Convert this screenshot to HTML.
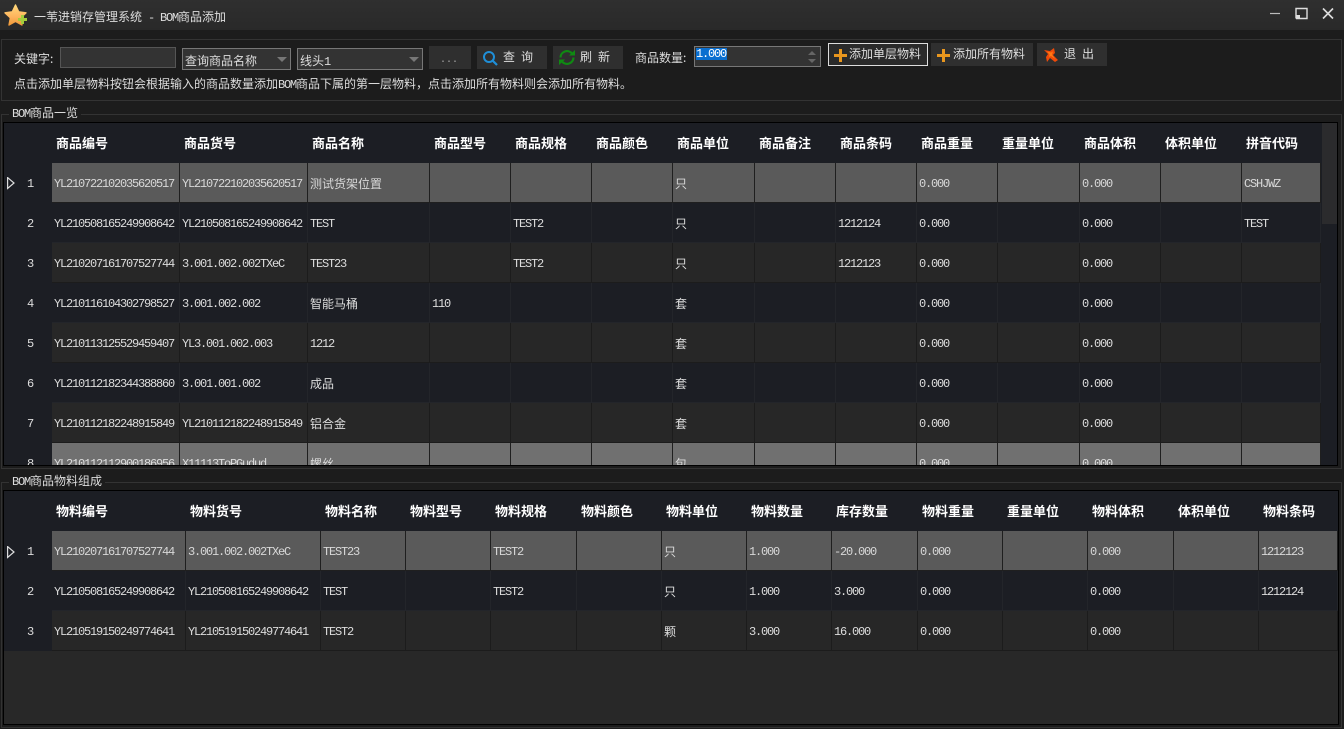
<!DOCTYPE html>
<html lang="zh">
<head>
<meta charset="utf-8">
<title>一苇进销存管理系统 - BOM商品添加</title>
<style>
*{box-sizing:border-box}
html,body{margin:0;padding:0;width:1344px;height:729px;overflow:hidden;background:#1c1c1c}
body{position:relative;color:#ddd;font:12px/14px "Liberation Mono","WenQuanYi Zen Hei","Noto Sans CJK SC",sans-serif}
.a{position:absolute}
.t{position:absolute;white-space:nowrap;font-family:"WenQuanYi Zen Hei","Noto Sans CJK SC",sans-serif;font-size:12px;line-height:14px;color:#ddd}
.l{font-family:"Liberation Mono",monospace;font-size:12px;letter-spacing:-1.2px}
.btn{position:absolute;background:#2f2f2f;color:#ddd}
.box{position:absolute;background:#333;border:1px solid #777}
.grid{position:absolute;background:#282828;border:1px solid #000;overflow:hidden}
table{position:absolute;left:0;top:0;border-collapse:separate;border-spacing:0;table-layout:fixed;background:#1c1e24}
td,th{padding:2px 0 0 2px;height:40px;white-space:nowrap;overflow:hidden;text-align:left;font-weight:normal;border-right:1px solid #23252a;border-bottom:1px solid #23252a;font-family:"Liberation Mono",monospace;font-size:12px;letter-spacing:-1.2px;color:#ddd;vertical-align:middle}
th{padding:0 0 1px 4px;font-family:"WenQuanYi Zen Hei","Noto Sans CJK SC",sans-serif;font-weight:bold;font-size:13px;letter-spacing:0;color:#fff;border:0;height:40px}
td.n,th.n{padding:1px 0 0 23px;text-align:left;border:0;background:#1c1e24;color:#ddd;font-size:12px}
td.c{font-family:"WenQuanYi Zen Hei","Noto Sans CJK SC",sans-serif;font-size:12px;letter-spacing:0}
tr.s td{background:#5a5a5a;border-color:#1f1f1f;color:#d8d8d8}
tr.g td{background:#272727;border-color:#1c1c1c}
tr.h td{background:#707070;border-color:#1f1f1f;color:#ddd}
tr td.n{background:#1c1e24!important;border:0;color:#ddd}
</style>
</head>
<body>
<!-- title bar -->
<div class="a" style="left:0;top:0;width:1344px;height:30px;background:linear-gradient(#2f2f2f,#292929)"></div>
<svg class="a" style="left:3px;top:2px" width="26" height="26" viewBox="0 0 26 26">
<defs><linearGradient id="st" x1="0" y1="0" x2="0" y2="1"><stop offset="0" stop-color="#ffd87a"/><stop offset=".6" stop-color="#fdb35c"/><stop offset="1" stop-color="#f09a3a"/></linearGradient></defs>
<path d="M12.5 3l3.2 6.8 7.3 1-5.4 5 1.4 7.2-6.5-3.6-6.5 3.6 1.4-7.2-5.4-5 7.300-1z" fill="url(#st)" stroke="url(#st)" stroke-width="1.4" stroke-linejoin="round"/>
<path d="M18 13h3v3h3v3h-3v3h-3v-3h-3v-3h3z" fill="#a4cc3c"/>
</svg>
<div class="t" style="left:34px;top:10px">一苇进销存管理系统<span class="l"> - BOM</span>商品添加</div>
<svg class="a" style="left:1265px;top:5px" width="75" height="20" viewBox="0 0 75 20" fill="none" stroke="#ddd">
<path d="M5 8.5h10" stroke-width="1.2" stroke="#bbb"/>
<path d="M31 13.5V3.5h11v10H31" stroke-width="1.4"/><rect x="31" y="10" width="4" height="4" fill="#ddd" stroke="none"/>
<path d="M58 3.500l10 10M68 3.500l-10 10" stroke-width="1.6"/>
</svg>
<!-- toolbar group -->
<div class="a" style="left:1px;top:39px;width:1341px;height:62px;border:1px solid #333"></div>
<div class="t" style="left:14px;top:52px">关键字:</div>
<div class="box" style="left:60px;top:47px;width:116px;height:21px;border-color:#555"></div>
<div class="box" style="left:182px;top:48px;width:109px;height:22px"></div>
<div class="t" style="left:185px;top:54px">查询商品名称</div>
<svg class="a" style="left:276px;top:56px" width="12" height="8"><path d="M1 1h10L6 6z" fill="#777"/></svg>
<div class="box" style="left:297px;top:48px;width:126px;height:22px"></div>
<div class="t" style="left:300px;top:54px">线头<span class="l">1</span></div>
<svg class="a" style="left:408px;top:56px" width="12" height="8"><path d="M1 1h10L6 6z" fill="#777"/></svg>
<div class="btn" style="left:429px;top:46px;width:42px;height:23px"></div>
<div class="t l" style="left:440px;top:54px;color:#aaa;font-size:10px;letter-spacing:0">...</div>
<div class="btn" style="left:477px;top:46px;width:70px;height:23px"></div>
<svg class="a" style="left:482px;top:50px" width="16" height="17" fill="none"><circle cx="7" cy="7" r="5" stroke="#1f8fd8" stroke-width="2"/><path d="M10.500 10.500l4.500 4.500" stroke="#1f8fd8" stroke-width="2.200"/></svg>
<div class="t" style="left:503px;top:50px;letter-spacing:6px">查询</div>
<div class="btn" style="left:553px;top:46px;width:70px;height:23px"></div>
<svg class="a" style="left:558px;top:49px" width="18" height="17" fill="none" stroke="#0f8a12" stroke-width="2.200"><path d="M2.500 8.500A6.500 6.500 0 0 1 14 4.500"/><path d="M15.500 8.500A6.500 6.500 0 0 1 4 12.500"/><path d="M11 6.500h6V1z" fill="#0f8a12" stroke="none"/><path d="M7 10.500H1V16z" fill="#0f8a12" stroke="none"/></svg>
<div class="t" style="left:580px;top:50px;letter-spacing:6px">刷新</div>
<div class="t" style="left:635px;top:51px">商品数量:</div>
<div class="box" style="left:694px;top:46px;width:127px;height:21px"></div>
<div class="a" style="left:696px;top:48px;width:31px;height:12px;background:#0a6fd0"></div>
<div class="t l" style="left:696px;top:47px;color:#fff">1.000</div>
<svg class="a" style="left:805px;top:48px" width="15" height="18"><path d="M3 7l4-4 4 4z" fill="#666"/><path d="M3 11l4 4 4-4z" fill="#666"/></svg>
<div class="btn" style="left:828px;top:43px;width:100px;height:23px;border:1px solid #ddd;background:#2a2a2a"></div>
<svg class="a" style="left:833px;top:48px" width="15" height="15"><path d="M6 1h3v5h5v3H9v5H6V9H1V6h5z" fill="#e8961e"/></svg>
<div class="t" style="left:849px;top:47px">添加单层物料</div>
<div class="btn" style="left:931px;top:43px;width:102px;height:23px"></div>
<svg class="a" style="left:936px;top:48px" width="15" height="15"><path d="M6 1h3v5h5v3H9v5H6V9H1V6h5z" fill="#e8961e"/></svg>
<div class="t" style="left:953px;top:47px">添加所有物料</div>
<div class="btn" style="left:1037px;top:43px;width:70px;height:23px"></div>
<svg class="a" style="left:1043px;top:47px" width="17" height="16"><path d="M1 3l6 1 4-3 1 5-2 2 5 5-3 2-5-4-3 4-1-5 2-3z" fill="#f04a08"/><path d="M4 4.500l4 1 2-1-1 3 3 4.500-4-3-2 1 .5-2.500z" fill="#ff7a14"/></svg>
<div class="t" style="left:1064px;top:47px;letter-spacing:6px">退出</div>
<div class="t" style="left:14px;top:77px">点击添加单层物料按钮会根据输入的商品数量添加<span class="l">BOM</span>商品下属的第一层物料&#65292;点击添加所有物料则会添加所有物料。</div>

<!-- group 1 -->
<div class="a" style="left:1px;top:114px;width:1341px;height:355px;border:1px solid #333"></div>
<div class="t" style="left:9px;top:106px;padding:0 3px;background:#1c1c1c"><span class="l">BOM</span>商品一览</div>
<div class="grid" style="left:3px;top:122px;width:1335px;height:344px;background:#1c1e24">
<div class="a" style="left:1318px;top:0;width:15px;height:101px;background:#2b2b2d"></div>
<table style="width:1317px">
<colgroup><col style="width:48px"><col style="width:128px"><col style="width:128px"><col style="width:122px"><col style="width:81px"><col style="width:81px"><col style="width:81px"><col style="width:82px"><col style="width:81px"><col style="width:81px"><col style="width:81px"><col style="width:82px"><col style="width:81px"><col style="width:81px"><col style="width:79px"></colgroup>
<tr style="height:40px"><th class="n"></th><th>商品编号</th><th>商品货号</th><th>商品名称</th><th>商品型号</th><th>商品规格</th><th>商品颜色</th><th>商品单位</th><th>商品备注</th><th>商品条码</th><th>商品重量</th><th>重量单位</th><th>商品体积</th><th>体积单位</th><th>拼音代码</th></tr>
<tr class="s"><td class="n">1</td><td>YL210722102035620517</td><td>YL210722102035620517</td><td class="c">测试货架位置</td><td></td><td></td><td></td><td class="c">只</td><td></td><td></td><td>0.000</td><td></td><td>0.000</td><td></td><td>CSHJWZ</td></tr>
<tr><td class="n">2</td><td>YL210508165249908642</td><td>YL210508165249908642</td><td>TEST</td><td></td><td>TEST2</td><td></td><td class="c">只</td><td></td><td>1212124</td><td>0.000</td><td></td><td>0.000</td><td></td><td>TEST</td></tr>
<tr class="g"><td class="n">3</td><td>YL210207161707527744</td><td>3.001.002.002TXeC</td><td>TEST23</td><td></td><td>TEST2</td><td></td><td class="c">只</td><td></td><td>1212123</td><td>0.000</td><td></td><td>0.000</td><td></td><td></td></tr>
<tr><td class="n">4</td><td>YL210116104302798527</td><td>3.001.002.002</td><td class="c">智能马桶</td><td>110</td><td></td><td></td><td class="c">套</td><td></td><td></td><td>0.000</td><td></td><td>0.000</td><td></td><td></td></tr>
<tr class="g"><td class="n">5</td><td>YL210113125529459407</td><td>YL3.001.002.003</td><td>1212</td><td></td><td></td><td></td><td class="c">套</td><td></td><td></td><td>0.000</td><td></td><td>0.000</td><td></td><td></td></tr>
<tr><td class="n">6</td><td>YL210112182344388860</td><td>3.001.001.002</td><td class="c">成品</td><td></td><td></td><td></td><td class="c">套</td><td></td><td></td><td>0.000</td><td></td><td>0.000</td><td></td><td></td></tr>
<tr class="g"><td class="n">7</td><td>YL210112182248915849</td><td>YL210112182248915849</td><td class="c">铝合金</td><td></td><td></td><td></td><td class="c">套</td><td></td><td></td><td>0.000</td><td></td><td>0.000</td><td></td><td></td></tr>
<tr class="h"><td class="n">8</td><td>YL210112112900186956</td><td>X11113ToPGudud</td><td class="c">螺丝</td><td></td><td></td><td></td><td class="c">包</td><td></td><td></td><td>0.000</td><td></td><td>0.000</td><td></td><td></td></tr>
</table>
<svg class="a" style="left:3px;top:54px" width="10" height="13" fill="none"><path d="M.6 .6L7 6 .6 11.500z" stroke="#ddd" stroke-width="1.200"/></svg>
</div>

<!-- group 2 -->
<div class="a" style="left:1px;top:482px;width:1341px;height:246px;border:1px solid #333"></div>
<div class="t" style="left:9px;top:474px;padding:0 3px;background:#1c1c1c"><span class="l">BOM</span>商品物料组成</div>
<div class="grid" style="left:3px;top:490px;width:1336px;height:235px">
<table style="width:1334px">
<colgroup><col style="width:48px"><col style="width:134px"><col style="width:135px"><col style="width:85px"><col style="width:85px"><col style="width:86px"><col style="width:85px"><col style="width:85px"><col style="width:85px"><col style="width:86px"><col style="width:85px"><col style="width:85px"><col style="width:86px"><col style="width:85px"><col style="width:79px"></colgroup>
<tr style="height:40px"><th class="n"></th><th>物料编号</th><th>物料货号</th><th>物料名称</th><th>物料型号</th><th>物料规格</th><th>物料颜色</th><th>物料单位</th><th>物料数量</th><th>库存数量</th><th>物料重量</th><th>重量单位</th><th>物料体积</th><th>体积单位</th><th>物料条码</th></tr>
<tr class="s"><td class="n">1</td><td>YL210207161707527744</td><td>3.001.002.002TXeC</td><td>TEST23</td><td></td><td>TEST2</td><td></td><td class="c">只</td><td>1.000</td><td>-20.000</td><td>0.000</td><td></td><td>0.000</td><td></td><td>1212123</td></tr>
<tr><td class="n">2</td><td>YL210508165249908642</td><td>YL210508165249908642</td><td>TEST</td><td></td><td>TEST2</td><td></td><td class="c">只</td><td>1.000</td><td>3.000</td><td>0.000</td><td></td><td>0.000</td><td></td><td>1212124</td></tr>
<tr class="g"><td class="n">3</td><td>YL210519150249774641</td><td>YL210519150249774641</td><td>TEST2</td><td></td><td></td><td></td><td class="c">颗</td><td>3.000</td><td>16.000</td><td>0.000</td><td></td><td>0.000</td><td></td><td></td></tr>
</table>
<svg class="a" style="left:3px;top:55px" width="10" height="13" fill="none"><path d="M.6 .6L7 6 .6 11.500z" stroke="#ddd" stroke-width="1.200"/></svg>
</div>
</body>
</html>
